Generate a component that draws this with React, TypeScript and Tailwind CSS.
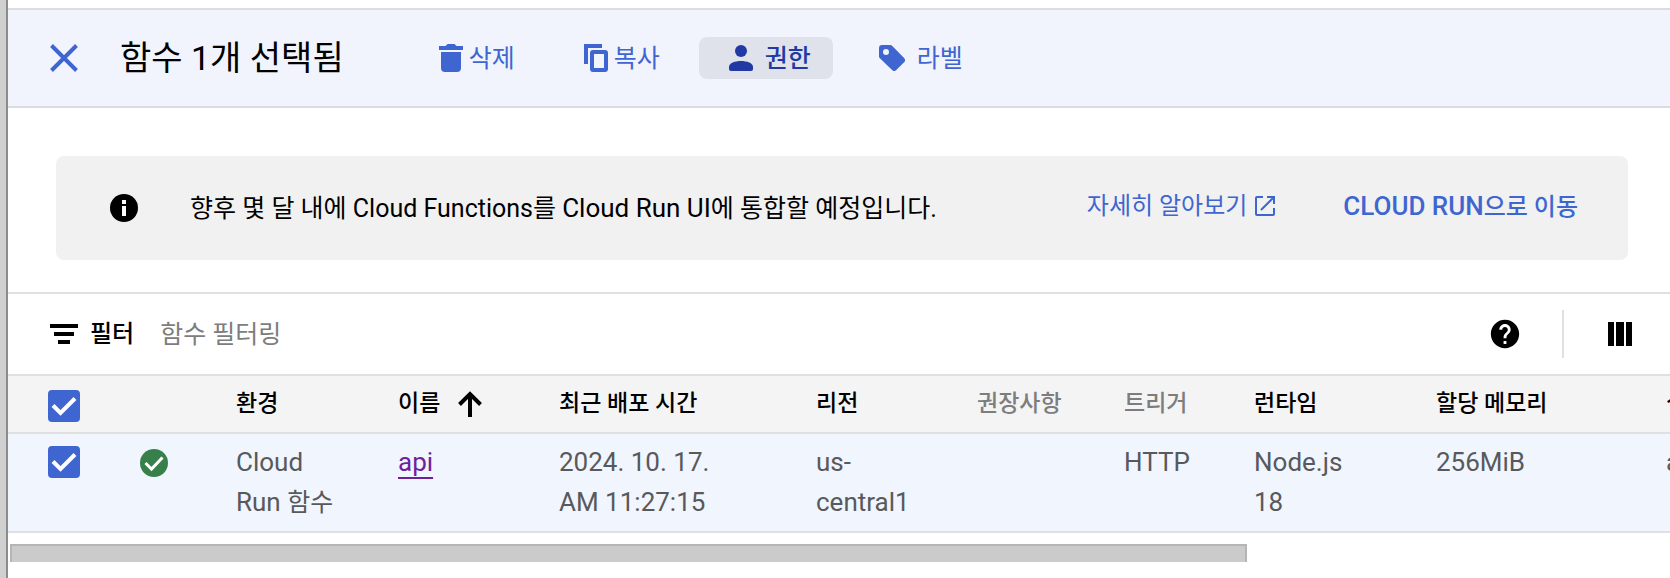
import * as React from "react";
import clsx from "clsx";

type Column = {
  id: string;
  label: string;
  width: string;
  muted?: boolean;
  sorted?: boolean;
};

const columns: Column[] = [
  { id: "env", label: "환경", width: "w-[162px]" },
  { id: "name", label: "이름", width: "w-[161px]", sorted: true },
  { id: "deployed", label: "최근 배포 시간", width: "w-[257px]" },
  { id: "region", label: "리전", width: "w-[161px]" },
  { id: "advice", label: "권장사항", width: "w-[147px]", muted: true },
  { id: "trigger", label: "트리거", width: "w-[130px]", muted: true },
  { id: "runtime", label: "런타임", width: "w-[182px]" },
  { id: "memory", label: "할당 메모리", width: "w-[230px]" },
  { id: "entry", label: "실행된 함수", width: "w-[242px]" },
];

export default function App() {
  return (
    <div className="flex overflow-hidden bg-white font-[Roboto,'Noto_Sans_CJK_KR',sans-serif] text-black">
      <div className="w-2 min-h-screen shrink-0 border-r-2 border-[#8c8c8c] bg-[#d0d0d0]" />
      <main className="min-w-0 flex-1 pt-2">
        <SelectionBar />
        <MigrationNotice />
        <FilterBar />
        <FunctionsTable />
        <div className="mt-[11px] ml-0.5 h-[18px] w-[74.4%] border-2 border-b-0 border-[#b5b5b5] bg-[#cbcbcb]" />
      </main>
    </div>
  );
}

function SelectionBar() {
  return (
    <header className="flex h-[100px] items-center border-y-2 border-[#dadce0] bg-[#f1f4fd] pl-8 text-[#3f66d0]">
      <button type="button" aria-label="닫기">
        <svg viewBox="0 0 48 48" className="size-12" fill="none" stroke="currentColor" strokeWidth="4" aria-hidden="true">
          <path d="m11.500 11.500 25 25M36.500 11.500l-25 25" />
        </svg>
      </button>
      <h1 className="ml-8 text-[34px] leading-10 text-black">함수 1개 선택됨</h1>
      <div className="ml-[65px] flex items-center text-[25px]">
        <ActionButton label="삭제">
          <svg viewBox="0 0 24 28" className="h-7 w-6" fill="currentColor" aria-hidden="true">
            <path d="M0 2h6.500L8.500 0h7l2 2H24v4H0zM2 8h20v16a4 4 0 0 1-4 4H6a4 4 0 0 1-4-4z" />
          </svg>
        </ActionButton>
        <ActionButton label="복사">
          <svg viewBox="0 0 24 28" className="h-7 w-6" fill="none" stroke="currentColor" strokeWidth="4" aria-hidden="true">
            <path d="M18 2H2v18" />
            <rect x="8" y="8" width="14" height="18" rx="1" />
          </svg>
        </ActionButton>
        <ActionButton label="권한" active>
          <svg viewBox="0 0 24 26" className="h-[26px] w-6" fill="currentColor" aria-hidden="true">
            <circle cx="12" cy="6" r="6" />
            <path d="M0 22c0-4 6-6 12-6s12 2 12 6v2a2 2 0 0 1-2 2H2a2 2 0 0 1-2-2z" />
          </svg>
        </ActionButton>
        <ActionButton label="라벨" spaced>
          <svg viewBox="0 0 26 26" className="size-[26px]" fill="currentColor" aria-hidden="true">
            <path
              fillRule="evenodd"
              d="M3 0h8.200a3 3 0 0 1 2.100.9l11.800 12.200a3 3 0 0 1 0 4.200l-7.800 7.800a3 3 0 0 1-4.200 0L.9 13.300A3 3 0 0 1 0 11.200V3a3 3 0 0 1 3-3zM7 4a3 3 0 1 0 0 6 3 3 0 0 0 0-6z"
            />
          </svg>
        </ActionButton>
      </div>
    </header>
  );
}

function ActionButton({
  label,
  active,
  spaced,
  children,
}: {
  label: string;
  active?: boolean;
  spaced?: boolean;
  children: React.ReactNode;
}) {
  return (
    <button
      type="button"
      className={clsx(
        "flex h-[42px] items-center rounded-lg whitespace-nowrap",
        active && "mr-4 gap-3 bg-[#dfe2ea] pr-[22px] pl-[30px] font-medium text-[#2139a5]",
        spaced && "gap-3 px-[30px]",
        !active && !spaced && "gap-1.5 pr-[39px] pl-[30px]",
      )}
    >
      {children}
      <span className="pt-0.5">{label}</span>
    </button>
  );
}

function MigrationNotice() {
  return (
    <section className="mt-12 mr-[42px] mb-8 ml-12 flex h-[104px] items-center rounded-lg bg-[#f1f1f1] pr-[50px] pl-[54px]">
      <svg viewBox="0 0 28 28" className="size-7 shrink-0" aria-hidden="true">
        <circle cx="14" cy="14" r="14" />
        <path d="M12 6h4v4h-4zM12 12h4v10h-4z" fill="#fff" />
      </svg>
      <p className="ml-[52px] flex-1 text-[25px] leading-8">
        향후 몇 달 내에 Cloud Functions를 <span className="text-[26px]">Cloud Run UI</span>에 통합할 예정입니다.
      </p>
      <div className="flex items-center gap-[68px] pb-1 text-2xl text-[#3f66d0]">
        <a href="#learn-more" className="flex items-center gap-2">
          자세히 알아보기
          <svg viewBox="0 0 20 20" className="size-5" fill="none" stroke="currentColor" strokeWidth="2" aria-hidden="true">
            <path d="M8 1H2a1 1 0 0 0-1 1v16a1 1 0 0 0 1 1h16a1 1 0 0 0 1-1v-6M12 1h7v7M18.500 1.500 6 14" />
          </svg>
        </a>
        <a href="#cloud-run" className="font-medium">
          <span className="text-[26px]">CLOUD RUN</span>으로 이동
        </a>
      </div>
    </section>
  );
}

function FilterBar() {
  return (
    <div className="flex h-[84px] items-center border-y-2 border-[#e0e0e0] pr-[38px] pl-[42px]">
      <svg viewBox="0 0 28 20" className="h-5 w-7" aria-hidden="true">
        <path d="M0 0h28v4H0zM4 8h20v4H4zM8 16h12v4H8z" />
      </svg>
      <label htmlFor="filter" className="ml-3 text-2xl font-medium">
        필터
      </label>
      <input
        id="filter"
        type="text"
        placeholder="함수 필터링"
        className="ml-[26px] h-12 min-w-0 flex-1 text-[25px] outline-none placeholder:text-[#7d7d7d]"
      />
      <button type="button" aria-label="도움말">
        <svg viewBox="0 0 24 24" className="size-[34px]" fill="currentColor" aria-hidden="true">
          <path d="M12 2C6.480 2 2 6.480 2 12s4.480 10 10 10 10-4.480 10-10S17.520 2 12 2zm1 17h-2v-2h2v2zm2.070-7.750-.9.920C13.450 12.900 13 13.500 13 15h-2v-.5c0-1.100.45-2.100 1.170-2.830l1.240-1.260c.37-.36.59-.86.59-1.410 0-1.100-.9-2-2-2s-2 .9-2 2H8c0-2.210 1.790-4 4-4s4 1.790 4 4c0 .88-.36 1.680-.93 2.250z" />
        </svg>
      </button>
      <div className="mr-11 ml-10 h-12 w-0.5 bg-[#e0e0e0]" />
      <button type="button" aria-label="열 표시 옵션">
        <svg viewBox="0 0 24 24" className="size-6" aria-hidden="true">
          <path d="M0 0h6v24H0zM8 0h8v24H8zM18 0h6v24h-6z" />
        </svg>
      </button>
    </div>
  );
}

function FunctionsTable() {
  return (
    <div className="overflow-hidden">
      <table className="w-full min-w-[1900px] table-fixed border-collapse text-left text-[26px]">
        <thead>
          <tr className="h-[57px] border-b-2 border-[#e0e0e0] bg-[#f4f4f4]">
            <th className="w-[132px] pt-1 pl-10">
              <Checkbox label="모두 선택" />
            </th>
            <th className="w-24" aria-label="상태" />
            {columns.map((col) => (
              <th
                key={col.id}
                className={clsx(
                  "text-[23px] leading-8 font-medium whitespace-nowrap",
                  col.width,
                  col.muted && "text-[#7d7d7d]",
                )}
              >
                <span className="flex items-center gap-[18px]">
                  {col.label}
                  {col.sorted && (
                    <svg viewBox="0 0 24 26" className="h-[26px] w-6" fill="none" stroke="currentColor" strokeWidth="4" aria-hidden="true">
                      <path d="M12 26V3M1.500 13.500 12 3l10.500 10.500" />
                    </svg>
                  )}
                </span>
              </th>
            ))}
          </tr>
        </thead>
        <tbody>
          <tr className="border-b-2 border-[#e0e0e0] bg-[#f0f5fe] align-top leading-10 text-[#58595b]">
            <td className="py-3 pl-10">
              <Checkbox label="api 선택" />
            </td>
            <td className="py-[15px]">
              <svg viewBox="0 0 28 28" className="size-7" aria-hidden="true">
                <circle cx="14" cy="14" r="14" fill="#37804a" />
                <path d="m5.500 14 6 6L22.500 8.500" fill="none" stroke="#fff" strokeWidth="3" />
              </svg>
            </td>
            <td className="py-2">
              Cloud
              <br />
              Run <span className="text-[25px]">함수</span>
            </td>
            <td className="py-2">
              <a href="#api" className="text-[#6f1f9c] underline decoration-2 underline-offset-6">
                api
              </a>
            </td>
            <td className="py-2">
              2024. 10. 17.
              <br />
              AM 11:27:15
            </td>
            <td className="py-2">
              us-
              <br />
              central1
            </td>
            <td />
            <td className="py-2">HTTP</td>
            <td className="py-2">
              Node.js
              <br />
              18
            </td>
            <td className="py-2">256MiB</td>
            <td className="py-2">api</td>
          </tr>
        </tbody>
      </table>
    </div>
  );
}

function Checkbox({ label }: { label: string }) {
  return (
    <span className="relative block size-8">
      <input
        type="checkbox"
        defaultChecked
        aria-label={label}
        className="peer block size-8 appearance-none rounded border-2 border-[#3f66d0] checked:bg-[#3f66d0]"
      />
      <svg
        viewBox="0 0 32 32"
        className="pointer-events-none absolute inset-0 hidden size-8 peer-checked:block"
        fill="none"
        stroke="#fff"
        strokeWidth="4"
        aria-hidden="true"
      >
        <path d="m5 15.500 7.500 7.500L27 8.500" />
      </svg>
    </span>
  );
}
